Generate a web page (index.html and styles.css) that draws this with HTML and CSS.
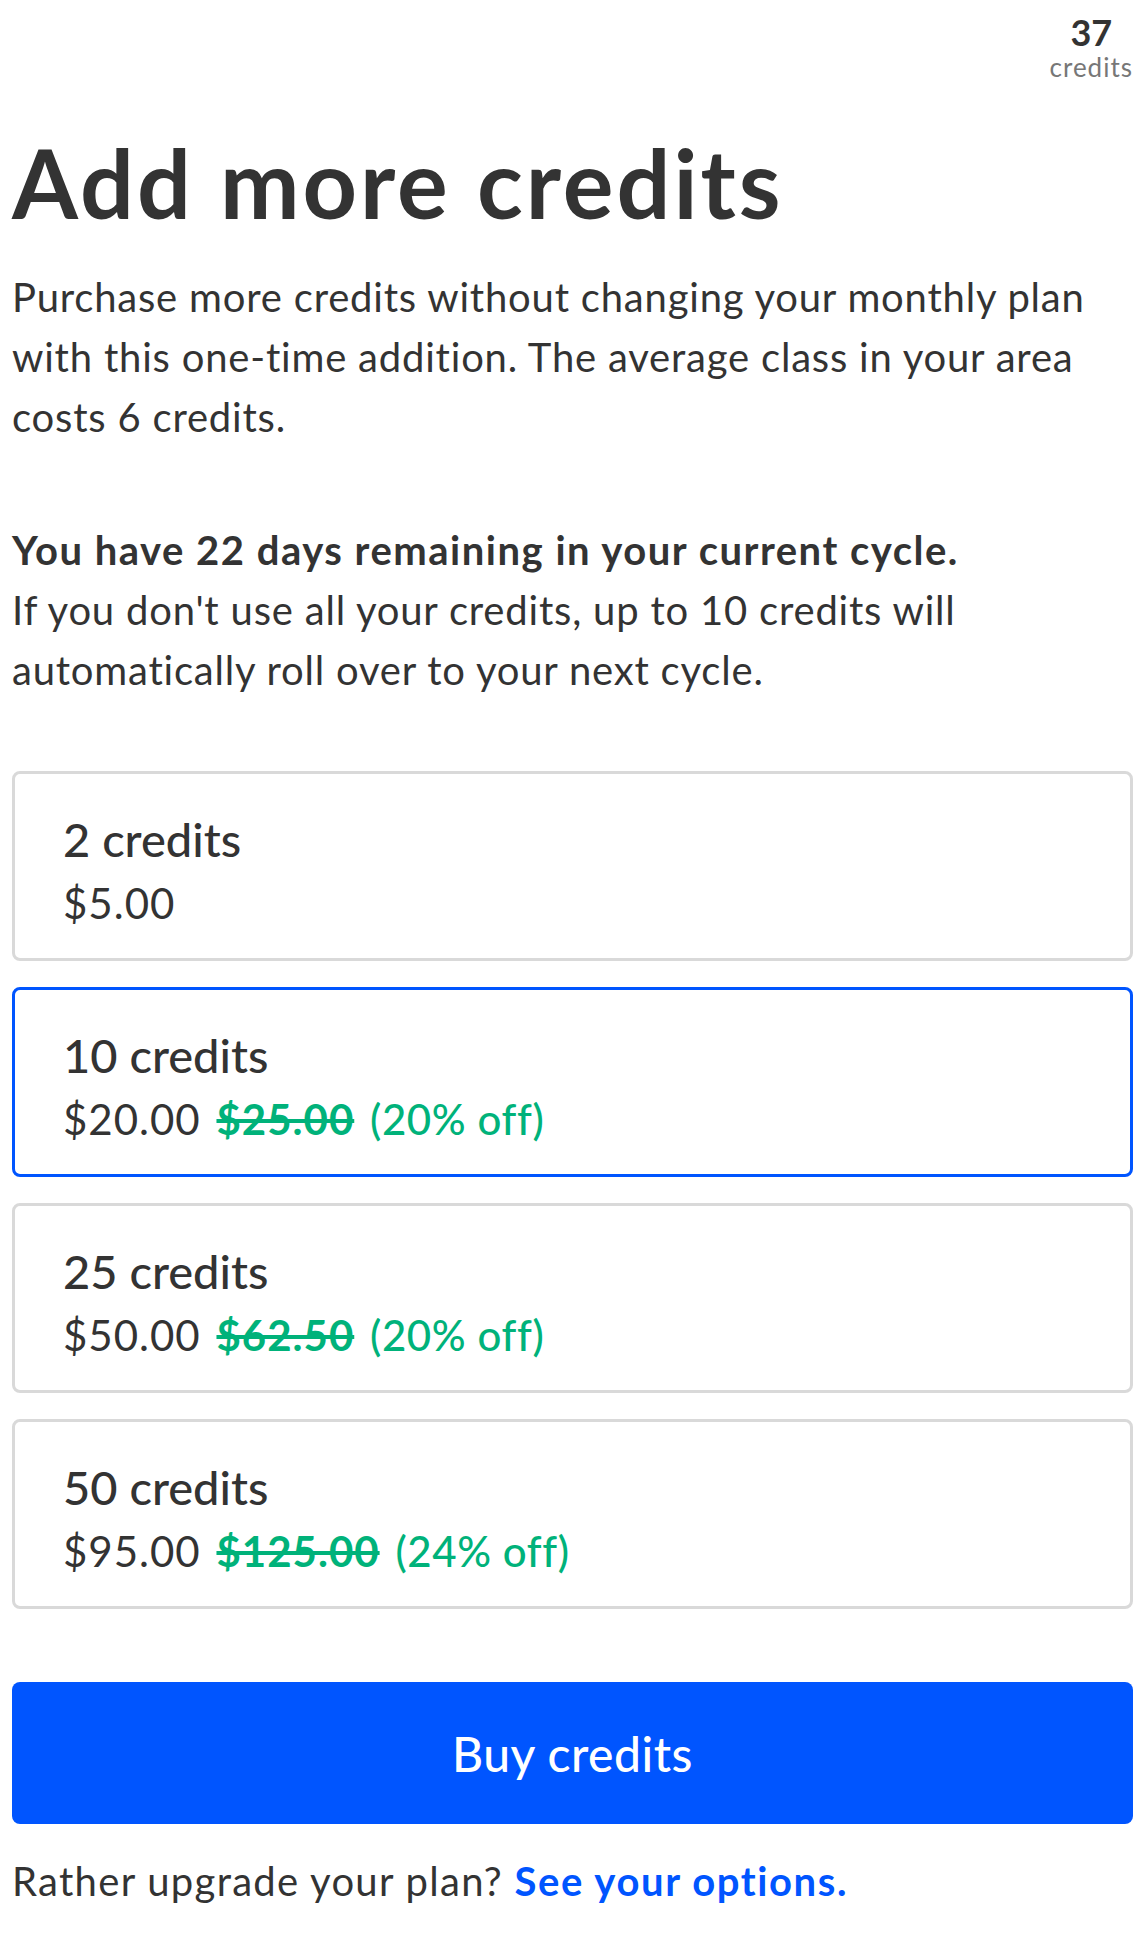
FILE: index.html
```html
<!DOCTYPE html>
<html lang="en">
<head>
<meta charset="utf-8">
<title>Add more credits</title>
<link rel="stylesheet" href="styles.css">
</head>
<body>
<div class="page">
  <header class="topbar">
    <div class="balance">
      <div class="balance-num">37</div>
      <div class="balance-label">credits</div>
    </div>
  </header>

  <h1 class="title">Add more credits</h1>

  <p class="intro">Purchase more credits without changing your monthly plan with this one-time addition. The average class in your area costs 6 credits.</p>

  <p class="cycle"><strong class="cycle-strong">You have 22 days remaining in your current cycle.</strong><br>If you don't use all your credits, up to 10 credits will automatically roll over to your next cycle.</p>

  <div class="options">
    <div class="option">
      <div class="option-title">2 credits</div>
      <div class="option-price">$5.00</div>
    </div>
    <div class="option option-selected">
      <div class="option-title">10 credits</div>
      <div class="option-price">$20.00 <span class="old">$25.00</span> <span class="off">(20% off)</span></div>
    </div>
    <div class="option">
      <div class="option-title">25 credits</div>
      <div class="option-price">$50.00 <span class="old">$62.50</span> <span class="off">(20% off)</span></div>
    </div>
    <div class="option">
      <div class="option-title">50 credits</div>
      <div class="option-price">$95.00 <span class="old">$125.00</span> <span class="off">(24% off)</span></div>
    </div>
  </div>

  <button class="buy" type="button">Buy credits</button>

  <p class="upgrade">Rather upgrade your plan? <a class="upgrade-link" href="#">See your options.</a></p>
</div>
</body>
</html>
```

FILE: styles.css
```css
html, body {
  margin: 0;
  padding: 0;
  background: #ffffff;
}

body {
  font-family: Lato, "Noto Sans", "Liberation Sans", sans-serif;
  color: #333333;
}

.page {
  padding: 0 15px 0 12px;
}

.topbar {
  display: flex;
  justify-content: flex-end;
  padding-top: 12px;
}

.balance {
  text-align: center;
}

.balance-num {
  font-size: 36px;
  font-weight: 700;
  line-height: 40px;
}

.balance-label {
  font-size: 26px;
  line-height: 30px;
  letter-spacing: 1px;
  color: #777777;
}

.title {
  margin: 45px 0 0 0;
  font-size: 95px;
  font-weight: 700;
  line-height: 110px;
  letter-spacing: 3px;
}

.intro {
  margin: 30px 0 0 0;
  font-size: 40px;
  line-height: 60px;
  font-weight: 400;
  letter-spacing: 0.8px;
}

.cycle {
  margin: 73px 0 0 0;
  font-size: 40px;
  line-height: 60px;
  font-weight: 400;
  letter-spacing: 0.8px;
}

.cycle-strong {
  font-weight: 700;
  letter-spacing: 1.5px;
}

.options {
  margin-top: 71px;
  display: flex;
  flex-direction: column;
  gap: 26px;
}

.option {
  border: 3px solid #d9d9d9;
  border-radius: 8px;
  box-sizing: content-box;
  padding: 10px 48px 0 48px;
  height: 174px;
  display: flex;
  flex-direction: column;
  justify-content: center;
}

.option-selected {
  border-color: #0055ff;
}

.option-title {
  font-size: 47px;
  line-height: 64px;
  font-weight: 500;
}

.option-price {
  font-size: 42px;
  line-height: 64px;
  font-weight: 400;
  letter-spacing: 1px;
}

.old {
  color: #00b27a;
  font-weight: 700;
  text-decoration: line-through;
  margin-left: 4px;
}

.off {
  color: #00b27a;
  font-weight: 500;
  letter-spacing: 0.6px;
  margin-left: 4px;
}

.buy {
  display: block;
  width: 100%;
  margin-top: 73px;
  height: 142px;
  border: none;
  border-radius: 8px;
  background: #0055ff;
  color: #ffffff;
  font-family: Lato, "Noto Sans", "Liberation Sans", sans-serif;
  font-size: 48px;
  font-weight: 500;
  letter-spacing: 0.5px;
}

.upgrade {
  margin: 22px 0 0 0;
  font-size: 40px;
  line-height: 70px;
  letter-spacing: 1.3px;
}

.upgrade-link {
  color: #0055ff;
  font-weight: 700;
  letter-spacing: 1.6px;
  text-decoration: none;
}
```
